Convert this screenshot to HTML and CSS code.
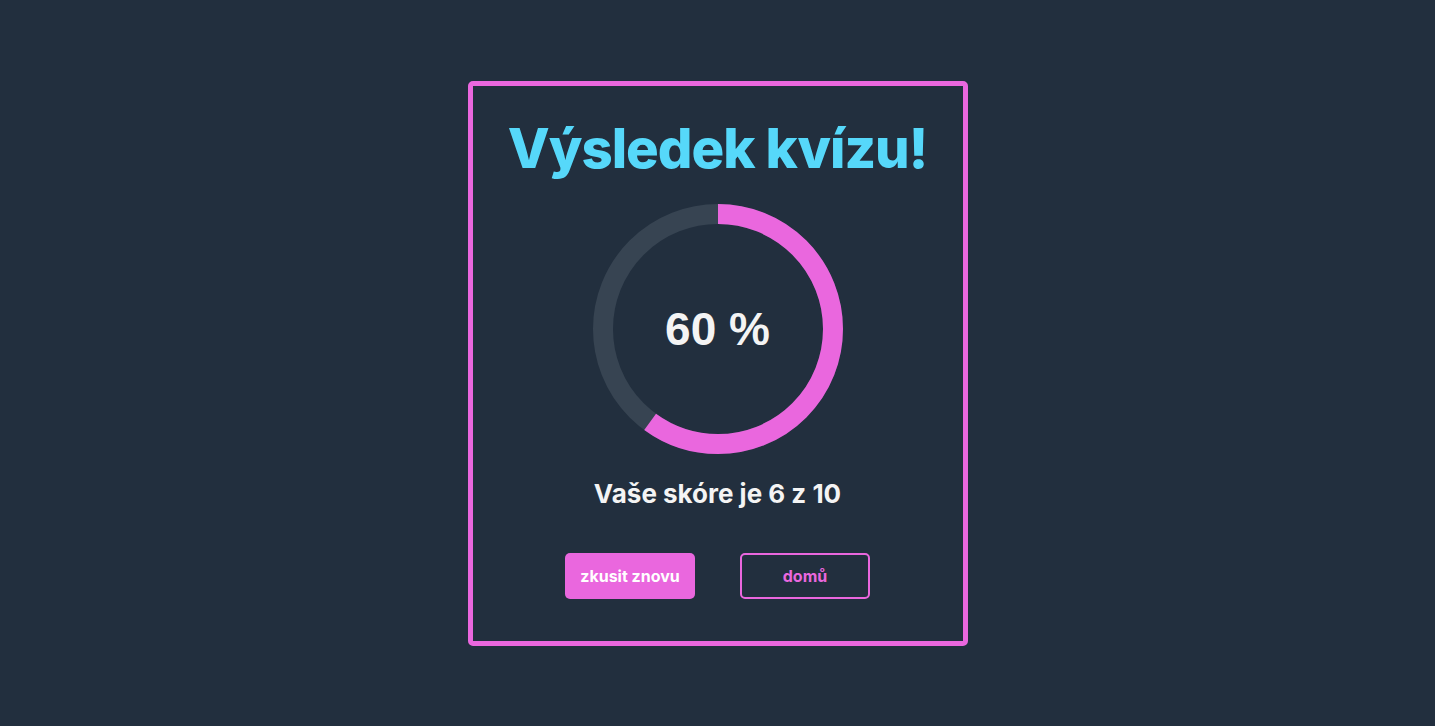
FILE: index.html
```html
<!DOCTYPE html>
<html lang="cs">
<head>
<meta charset="utf-8">
<title>Výsledek kvízu</title>
<link rel="stylesheet" href="styles.css">
</head>
<body>
<main class="card">
  <h1 class="title">Výsledek kvízu!</h1>
  <div class="ring">
    <svg class="ring-svg" width="250" height="250" viewBox="0 0 250 250">
      <circle class="ring-track" cx="125" cy="125" r="115"></circle>
      <circle class="ring-value" cx="125" cy="125" r="115" style="stroke-dasharray: 433.5 722.6"></circle>
    </svg>
    <span class="ring-label">60 %</span>
  </div>
  <p class="score">Vaše skóre je 6 z 10</p>
  <div class="actions">
    <button class="btn btn-primary">zkusit znovu</button>
    <button class="btn btn-outline">domů</button>
  </div>
</main>
</body>
</html>
```

FILE: styles.css
```css
* { box-sizing: border-box; }
html, body { margin: 0; padding: 0; }
body {
  background: #222f3e;
  min-height: 100vh;
  display: flex;
  align-items: center;
  justify-content: center;
  font-family: Inter, "Open Sans", sans-serif;
}
.card {
  width: 500px;
  height: 565px;
  border: 5px solid #ea67de;
  border-radius: 5px;
  display: flex;
  flex-direction: column;
  align-items: center;
  padding-top: 30px;
}
.title {
  margin: 0;
  color: #56d8fa;
  font-size: 54.5px;
  font-weight: 800;
  line-height: 64px;
  letter-spacing: -1px;
}
.ring {
  position: relative;
  width: 250px;
  height: 250px;
  margin-top: 24px;
}
.ring-svg { display: block; transform: rotate(-90deg); }
.ring-track { fill: none; stroke: #374452; stroke-width: 20; }
.ring-value { fill: none; stroke: #ea67de; stroke-width: 20; }
.ring-label {
  position: absolute;
  inset: 0;
  display: flex;
  align-items: center;
  justify-content: center;
  color: #f4f4f4;
  font-family: "Liberation Sans", Arial, sans-serif;
  font-weight: 700;
  font-size: 46px;
}
.score {
  margin: 22px 0 0;
  color: #f4f4f4;
  font-size: 26px;
  font-weight: 700;
  line-height: 36px;
}
.actions {
  display: flex;
  gap: 45px;
  margin-top: 41px;
}
.btn {
  width: 130px;
  height: 46px;
  border-radius: 5px;
  font-family: Inter, sans-serif;
  font-size: 16px;
  font-weight: 700;
  cursor: pointer;
}
.btn-primary {
  background: #ea67de;
  color: #ffffff;
  border: none;
}
.btn-outline {
  background: transparent;
  color: #ea67de;
  border: 2px solid #ea67de;
}
```
